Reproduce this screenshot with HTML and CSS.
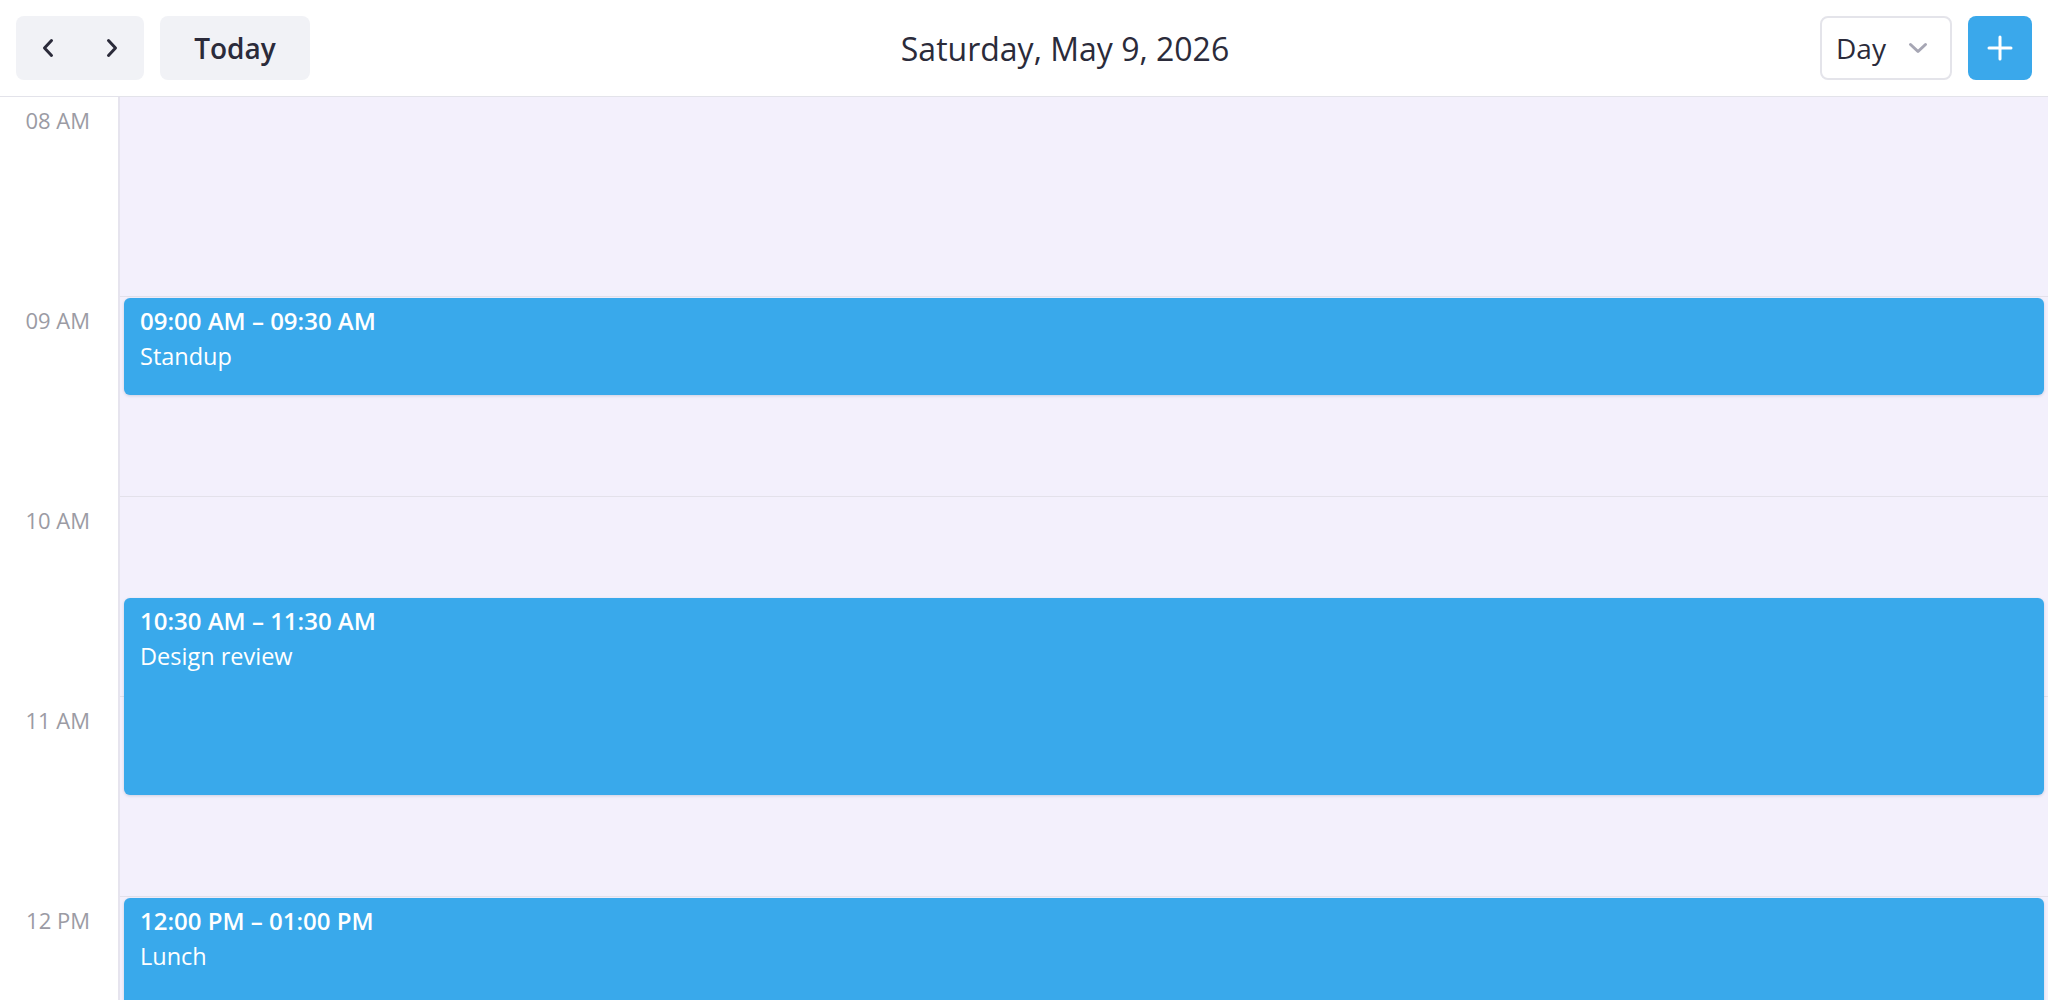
FILE: index.html
```html
<!DOCTYPE html>
<html lang="en">
<head>
<meta charset="utf-8">
<title>Calendar - Day</title>
<link rel="stylesheet" href="styles.css">
</head>
<body>
<div class="app">
  <header class="toolbar">
    <div class="toolbar-left">
      <div class="nav-group">
        <button class="nav-btn" aria-label="Previous day">
          <svg width="14" height="20" viewBox="0 0 14 20"><path d="M10.5 2.5 L3.5 10 L10.5 17.5" fill="none" stroke="#2b2b3a" stroke-width="3" stroke-linecap="round" stroke-linejoin="round"/></svg>
        </button>
        <button class="nav-btn" aria-label="Next day">
          <svg width="14" height="20" viewBox="0 0 14 20"><path d="M3.5 2.5 L10.5 10 L3.5 17.5" fill="none" stroke="#2b2b3a" stroke-width="3" stroke-linecap="round" stroke-linejoin="round"/></svg>
        </button>
      </div>
      <button class="today-btn">Today</button>
    </div>
    <h1 class="title">Saturday, May 9, 2026</h1>
    <div class="toolbar-right">
      <div class="view-select">
        <span class="view-label">Day</span>
        <svg class="view-chevron" width="20" height="12" viewBox="0 0 20 12"><path d="M2.5 2.5 L10 9.5 L17.5 2.5" fill="none" stroke="#a6a6b4" stroke-width="3" stroke-linecap="round" stroke-linejoin="round"/></svg>
      </div>
      <button class="add-btn" aria-label="Add event">
        <svg width="26" height="26" viewBox="0 0 26 26"><path d="M13 2 V24 M2 13 H24" stroke="#ffffff" stroke-width="3" stroke-linecap="round"/></svg>
      </button>
    </div>
  </header>

  <main class="schedule">
    <div class="time-col">
      <div class="hour-label">08 AM</div>
      <div class="hour-label">09 AM</div>
      <div class="hour-label">10 AM</div>
      <div class="hour-label">11 AM</div>
      <div class="hour-label">12 PM</div>
    </div>
    <div class="day-col">
      <div class="event" style="grid-row: 3 / 4;">
        <div class="event-time">09:00 AM – 09:30 AM</div>
        <div class="event-title">Standup</div>
      </div>
      <div class="event" style="grid-row: 6 / 8;">
        <div class="event-time">10:30 AM – 11:30 AM</div>
        <div class="event-title">Design review</div>
      </div>
      <div class="event" style="grid-row: 9 / 11;">
        <div class="event-time">12:00 PM – 01:00 PM</div>
        <div class="event-title">Lunch</div>
      </div>
    </div>
  </main>
</div>
</body>
</html>
```

FILE: styles.css
```css
* {
  box-sizing: border-box;
}

html, body {
  margin: 0;
  padding: 0;
  height: 100%;
  overflow: hidden;
  background: #ffffff;
}

body {
  font-family: "Open Sans", "Noto Sans", sans-serif;
  color: #2b2b3a;
}

.app {
  display: flex;
  flex-direction: column;
  height: 100vh;
}

.toolbar {
  flex: 0 0 auto;
  height: 97px;
  padding: 16px 16px;
  display: flex;
  align-items: center;
  gap: 16px;
  border-bottom: 1px solid #e3e3ea;
  background: #ffffff;
}

.toolbar-left {
  display: flex;
  gap: 16px;
  align-items: center;
}

.nav-group {
  display: flex;
  background: #f1f2f6;
  border-radius: 8px;
  height: 64px;
}

.nav-btn {
  width: 64px;
  height: 64px;
  border: 0;
  background: transparent;
  display: flex;
  align-items: center;
  justify-content: center;
  padding: 0;
  cursor: pointer;
}

.today-btn {
  height: 64px;
  width: 150px;
  border: 0;
  border-radius: 8px;
  background: #f1f2f6;
  font-family: inherit;
  font-weight: 600;
  font-size: 28px;
  color: #2b2b3a;
  padding: 0;
  cursor: pointer;
}

.title {
  flex: 1 1 auto;
  margin: 0;
  text-align: center;
  font-size: 32px;
  font-weight: 400;
  color: #2b2b3a;
  white-space: nowrap;
}

.toolbar-right {
  display: flex;
  justify-content: flex-end;
  align-items: center;
  gap: 16px;
}

.view-select {
  width: 132px;
  height: 64px;
  border: 2px solid #e4e4ea;
  border-radius: 8px;
  display: flex;
  align-items: center;
  justify-content: space-between;
  padding: 0 22px 0 14px;
}

.view-label {
  font-size: 28px;
  color: #2b2b3a;
}

.add-btn {
  width: 64px;
  height: 64px;
  border: 0;
  border-radius: 8px;
  background: #3aa8eb;
  display: flex;
  align-items: center;
  justify-content: center;
  padding: 0;
  cursor: pointer;
}

.schedule {
  flex: 1 1 auto;
  display: flex;
  overflow: hidden;
}

.time-col {
  flex: 0 0 120px;
  border-right: 2px solid #e6e4ee;
  background: #ffffff;
}

.hour-label {
  height: 200px;
  padding: 9px 28px 0 0;
  text-align: right;
  font-size: 22px;
  line-height: 28px;
  color: #9b9ba4;
}

.day-col {
  flex: 1 1 auto;
  display: grid;
  grid-template-rows: repeat(12, 100px);
  align-content: start;
  background-color: #f3f0fc;
  background-image: repeating-linear-gradient(to bottom, transparent 0, transparent 199px, #e3e1ea 199px, #e3e1ea 200px);
}

.event {
  grid-column: 1;
  margin: 1px 4px 2px 4px;
  background: #39a9eb;
  border-radius: 6px;
  box-shadow: 0 1px 3px rgba(40, 60, 100, 0.18);
  padding: 6px 16px;
  color: #ffffff;
  overflow: hidden;
}

.event-time {
  font-weight: 600;
  font-size: 24px;
  line-height: 34px;
}

.event-title {
  font-size: 23.5px;
  line-height: 36px;
}
```
